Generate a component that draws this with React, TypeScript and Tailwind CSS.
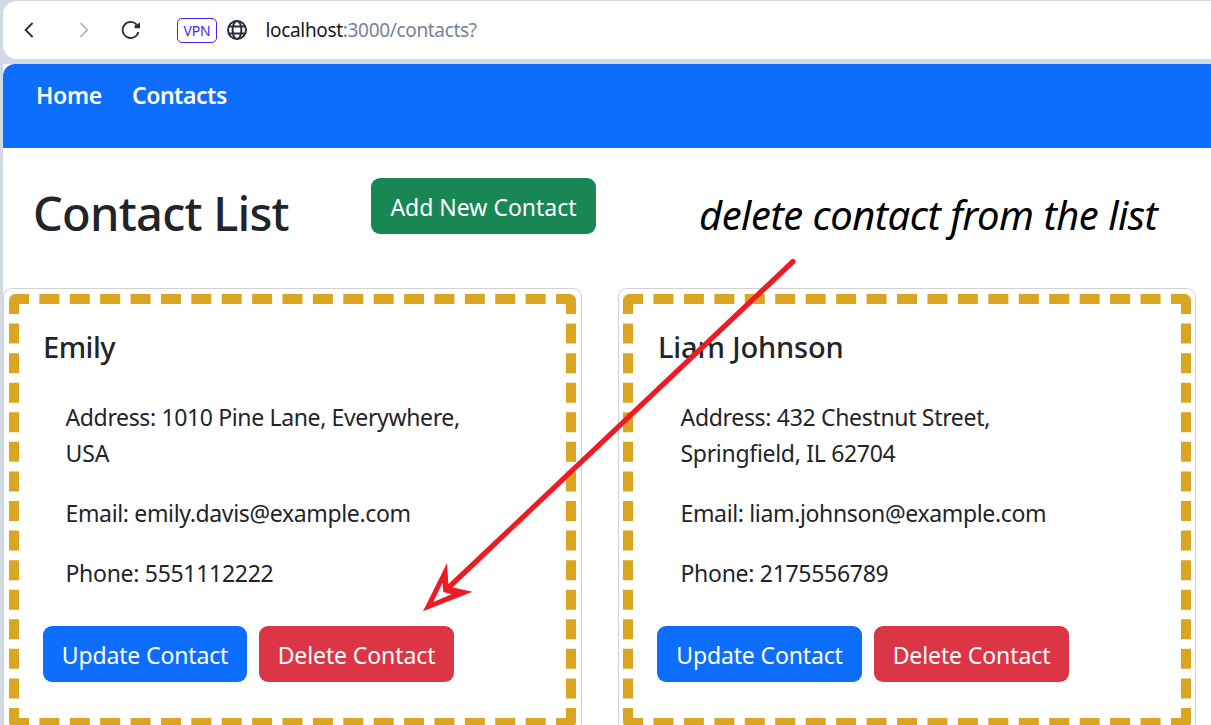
import React from "react";

type Line = { text: string; className: string };

type Contact = {
  name: Line;
  cardClass: string;
  bodyClass: string;
  updateClass: string;
  address: Line[];
  email: string;
  phone: string;
};

const contacts: Contact[] = [
  {
    name: { text: "Emily", className: "tracking-[-0.5px]" },
    cardClass: "w-[579px] px-[5px]",
    bodyClass: "pl-[22.5px]",
    updateClass: "w-[204px]",
    address: [
      { text: "Address: 1010 Pine Lane, Everywhere,", className: "tracking-[-0.36px]" },
      { text: "USA", className: "tracking-[-0.1px]" },
    ],
    email: "emily.davis@example.com",
    phone: "5551112222",
  },
  {
    name: { text: "Liam Johnson", className: "pl-px tracking-[-0.15px]" },
    cardClass: "w-[578px] px-[4px]",
    bodyClass: "pl-[23.5px]",
    updateClass: "w-[205px]",
    address: [
      { text: "Address: 432 Chestnut Street,", className: "tracking-[-0.32px]" },
      { text: "Springfield, IL 62704", className: "tracking-[-0.3px]" },
    ],
    email: "liam.johnson@example.com",
    phone: "2175556789",
  },
];

function BrowserBar() {
  return (
    <div className="mt-px ml-[3px] flex h-[58px] shrink-0 items-center rounded-l-[14px] bg-white">
      <svg className="ml-[20px] h-5 w-3 shrink-0" viewBox="0 0 12 20" fill="none" stroke="#25303b" strokeWidth="1.8">
        <path d="M9.6 3 2.6 10l7 7" />
      </svg>
      <svg className="ml-[43px] h-5 w-3 shrink-0" viewBox="0 0 12 20" fill="none" stroke="#b4b9be" strokeWidth="1.8">
        <path d="M2.4 3l7 7-7 7" />
      </svg>
      <svg className="ml-[31px] h-5 w-5 shrink-0" viewBox="0 0 20 20" fill="none" stroke="#25303b" strokeWidth="1.8">
        <path d="M17.4 12A8 8 0 1 1 15.6 4.6" />
        <path d="M19 2.4v5.8h-5.4V5.8z" fill="#25303b" stroke="none" />
      </svg>
      <div className="ml-[36px] flex h-[25px] w-10 shrink-0 items-center justify-center rounded-[5px] border border-[#4a1ff5] pt-px text-[14px] tracking-[-0.2px] text-[#4a1ff5]">
        VPN
      </div>
      <svg className="ml-[10px] h-5 w-5 shrink-0" viewBox="0 0 20 20" fill="none" stroke="#25303b" strokeWidth="2">
        <circle cx="10" cy="10" r="9" />
        <ellipse cx="10" cy="10" rx="4.4" ry="9" />
        <path d="M1.8 6.6h16.4M1.8 13.4h16.4" />
      </svg>
      <span className="ml-[18.5px] text-[19px] tracking-[-0.33px] whitespace-nowrap text-[#16191d]">
        localhost<span className="text-[#738496]">:3000/contacts?</span>
      </span>
    </div>
  );
}

function ContactCard({ contact }: { contact: Contact }) {
  return (
    <article
      className={`h-[446px] shrink-0 rounded-[9px] border border-black/[0.175] bg-white py-[5px] ${contact.cardClass}`}
    >
      <div className="overflow-hidden rounded-[7px]">
        <div className="h-[434px] border-[10px] border-dashed border-[#daa520] px-6 pt-[25px]">
          <h2 className={`text-[29px] leading-9 font-medium whitespace-nowrap ${contact.name.className}`}>
            {contact.name.text}
          </h2>
          <div className={`mt-[34px] whitespace-nowrap ${contact.bodyClass}`}>
            <p>
              {contact.address.map((line) => (
                <span key={line.text} className={`block ${line.className}`}>
                  {line.text}
                </span>
              ))}
            </p>
            <p className="mt-6 tracking-[-0.35px]">Email: {contact.email}</p>
            <p className="mt-6 tracking-[-0.3px]">Phone: {contact.phone}</p>
          </div>
          <div className="mt-[35px] flex gap-3 whitespace-nowrap text-white">
            <button className={`h-14 rounded-[9px] bg-[#0d6efd] pt-0.5 tracking-[-0.15px] ${contact.updateClass}`}>
              Update Contact
            </button>
            <button className="h-14 w-[195px] rounded-[9px] bg-[#dc3545] pt-0.5 tracking-[-0.1px]">Delete Contact</button>
          </div>
        </div>
      </div>
    </article>
  );
}

export default function App() {
  return (
    <div className="relative flex h-[725px] w-[1211px] flex-col overflow-hidden bg-[#d1dae2] font-['Noto_Sans',sans-serif] text-[23px] leading-9 text-[#212529]">
      <BrowserBar />
      <main className="mt-[5px] ml-[3px] flex-1 bg-white">
        <nav className="flex h-[84px] gap-[30px] rounded-tl-[12px] bg-[#0d6efd] pt-[13px] pl-[33px] font-semibold text-white">
          <a className="tracking-[-0.3px]">Home</a>
          <a className="tracking-[-0.45px]">Contacts</a>
        </nav>
        <header className="flex h-[140px] items-start whitespace-nowrap">
          <h1 className="mt-[36px] ml-[30px] w-[338px] text-[47px] leading-[58px] font-medium tracking-[-0.75px]">
            Contact List
          </h1>
          <button className="mt-[30px] h-14 w-[225px] rounded-[9px] bg-[#198754] pt-0.5 text-white">
            Add New Contact
          </button>
          <p className="mt-[38px] ml-[103px] text-[40px] leading-[58px] tracking-[-0.5px] text-black italic">
            delete contact from the list
          </p>
        </header>
        <section className="flex gap-9">
          {contacts.map((contact) => (
            <ContactCard key={contact.email} contact={contact} />
          ))}
        </section>
      </main>
      <svg
        className="pointer-events-none absolute top-[250px] left-[415px] h-[370px] w-[390px]"
        viewBox="415 250 390 370"
        fill="none"
      >
        <path d="M793 261.5 447 589" stroke="#ed1c24" strokeWidth="5.2" strokeLinecap="round" />
        <path
          d="M423 611.3 447 563 448.5 586.5 472.5 591.8z"
          fill="#ed1c24"
        />
        <path d="M442.5 583 433.3 602 451.5 594.3 443.3 592z" fill="#fff" />
      </svg>
    </div>
  );
}
